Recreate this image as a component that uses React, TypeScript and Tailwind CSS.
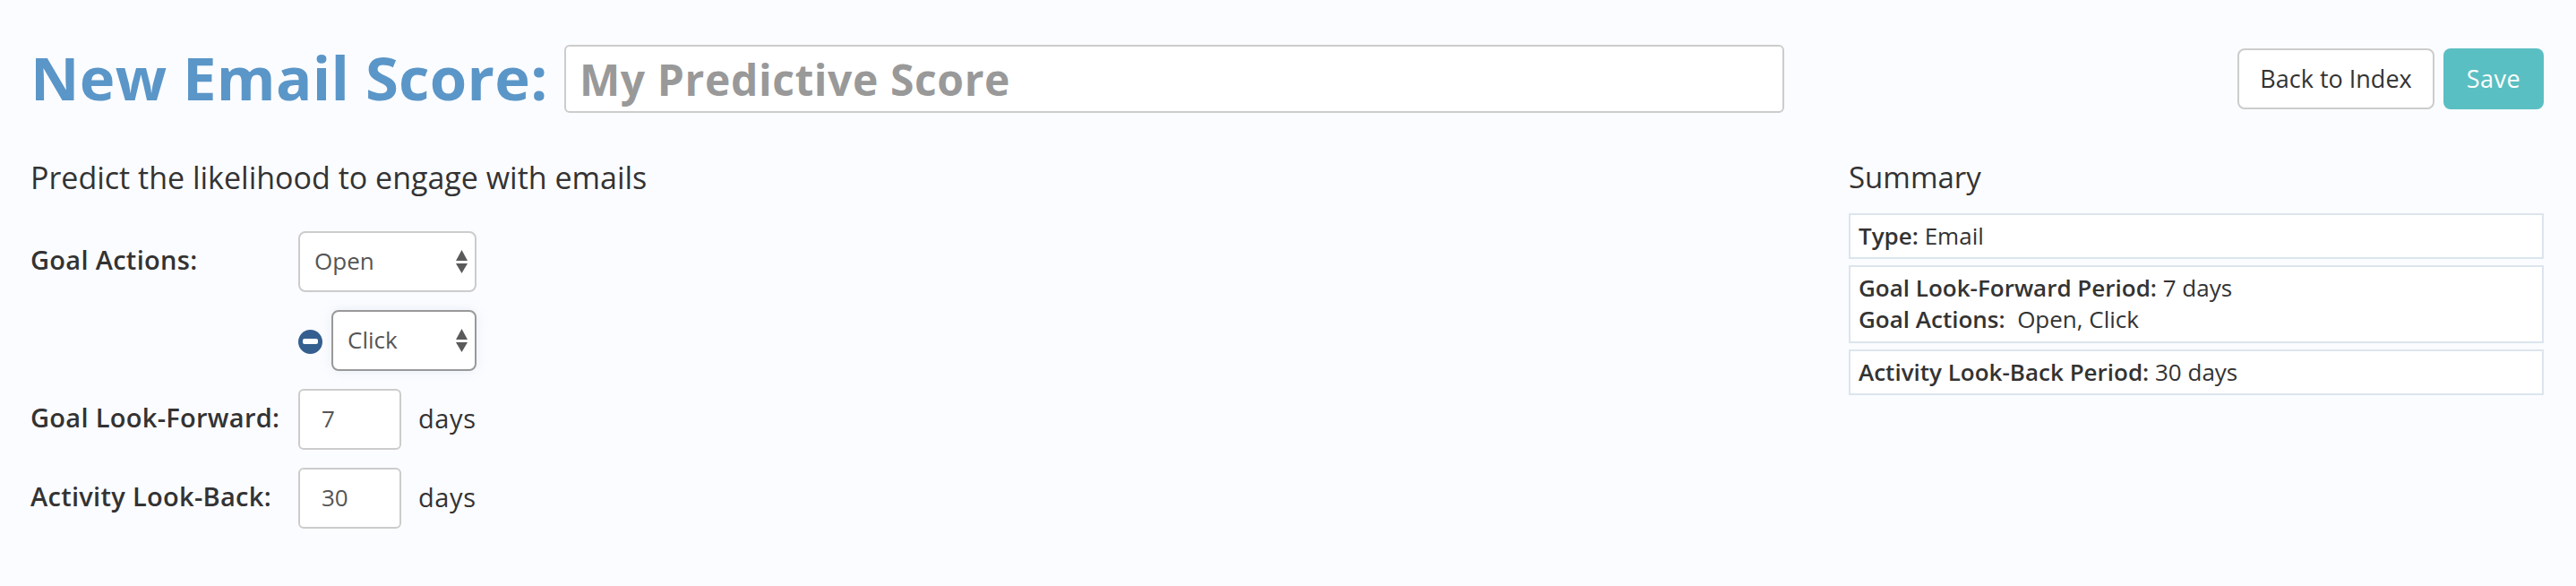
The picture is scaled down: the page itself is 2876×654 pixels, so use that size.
import React from "react";

const font = "font-['Open_Sans','Lato',sans-serif]";

function Arrows() {
  return (
    <svg className="absolute right-[10px] top-1/2 -translate-y-1/2 pointer-events-none" width="13" height="26" viewBox="0 0 13 26" aria-hidden="true">
      <path d="M6.5 0 L13 12 L0 12 Z" fill="#5a5a5a" />
      <path d="M6.5 26 L13 15 L0 15 Z" fill="#5a5a5a" />
    </svg>
  );
}

function Select({ value, active, className }: { value: string; active?: boolean; className: string }) {
  return (
    <div className={`relative h-[68px] ${className}`}>
      <select
        defaultValue={value}
        className={`w-full h-full appearance-none bg-white rounded-[8px] border-2 pl-[16px] pb-[2px] text-[26px] text-[#555] outline-none ${
          active ? "border-[#999] shadow-[0_0_14px_rgba(150,170,200,0.18)]" : "border-[#ccc]"
        }`}
      >
        <option>{value}</option>
      </select>
      <Arrows />
    </div>
  );
}

function Label({ children }: { children: React.ReactNode }) {
  return <div className="w-[299px] shrink-0 font-semibold text-[29px] tracking-[0.3px] text-[#333] -mt-[5px]">{children}</div>;
}

function NumberRow({ label, value }: { label: string; value: string }) {
  return (
    <div className="flex items-center h-[68px]">
      <Label>{label}</Label>
      <input
        readOnly
        value={value}
        className="w-[115px] h-[68px] bg-white border-2 border-[#ccc] rounded-[6px] pl-[24px] pb-[2px] text-[26px] text-[#555] outline-none"
      />
      <span className="ml-[19px] -mt-[3px] text-[29px] tracking-[0.6px] text-[#333]">days</span>
    </div>
  );
}

function SummaryBox({ children, className }: { children: React.ReactNode; className?: string }) {
  return (
    <div className={`border-2 border-[#dce5ee] bg-white px-[9px] py-[6px] text-[26px] leading-[35px] text-[#333] ${className ?? ""}`}>
      {children}
    </div>
  );
}

export default function App() {
  return (
    <div className={`${font} w-[2876px] h-[654px] bg-[#fbfcff] overflow-hidden pl-[34px] pr-[36px] pt-[50px]`}>
      <div className="flex items-center justify-between">
        <div className="flex items-center">
          <h1 className="w-[574px] text-[67px] tracking-[0.3px] leading-[76px] -mt-[4px] font-bold text-[#5b96c8] whitespace-nowrap">New Email Score:</h1>
          <input
            placeholder="My Predictive Score"
            className="ml-[22px] w-[1362px] h-[76px] bg-white border-2 border-[#ccc] rounded-[6px] px-[15px] text-[48px] tracking-[0.6px] font-bold text-[#333] placeholder:text-[#999] placeholder:opacity-100 outline-none"
          />
        </div>
        <div className="flex items-center gap-[10px]">
          <button className="w-[220px] h-[68px] bg-white border-2 border-[#ccc] rounded-[8px] text-[27px] text-[#333]">Back to Index</button>
          <button className="w-[112px] h-[68px] bg-[#5abfc2] rounded-[8px] text-[27px] tracking-[0.5px] text-white">Save</button>
        </div>
      </div>

      <div className="flex justify-between mt-[50px]">
        <div>
          <p className="text-[34px] leading-[44px] text-[#333]">Predict the likelihood to engage with emails</p>
          <div className="mt-[38px] flex flex-col">
            <div className="flex items-center">
              <Label>Goal Actions:</Label>
              <Select value="Open" className="w-[199px]" />
            </div>
            <div className="flex items-center mt-[20px] ml-[299px] w-[199px]">
              <span className="w-[27px] h-[27px] mt-[2px] rounded-full bg-[#355f8f] flex items-center justify-center shrink-0">
                <span className="w-[17px] h-[6px] rounded-[2px] bg-white" />
              </span>
              <Select value="Click" active className="ml-[10px] flex-1" />
            </div>
            <div className="mt-[20px] flex flex-col gap-[20px]">
              <NumberRow label="Goal Look-Forward:" value="7" />
              <NumberRow label="Activity Look-Back:" value="30" />
            </div>
          </div>
        </div>

        <div className="w-[776px]">
          <h2 className="text-[33px] leading-[44px] text-[#333]">Summary</h2>
          <div className="mt-[18px] flex flex-col gap-[7px]">
            <SummaryBox>
              <b className="font-semibold">Type:</b> Email
            </SummaryBox>
            <SummaryBox className="pb-[7px]">
              <div><b className="font-semibold">Goal Look-Forward Period:</b> 7 days</div>
              <div><b className="font-semibold">Goal Actions:</b>&nbsp; Open, Click</div>
            </SummaryBox>
            <SummaryBox>
              <b className="font-semibold">Activity Look-Back Period:</b> 30 days
            </SummaryBox>
          </div>
        </div>
      </div>
    </div>
  );
}
